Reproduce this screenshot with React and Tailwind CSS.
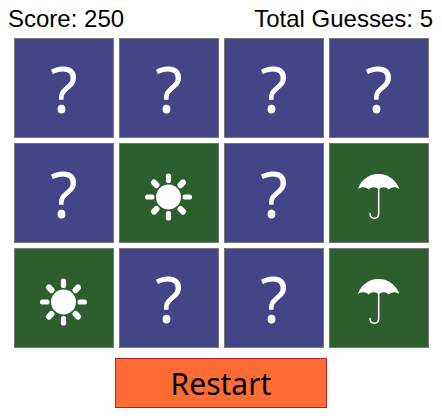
const cards = ["?", "?", "?", "?", "?", "sun", "?", "umbrella", "sun", "?", "?", "umbrella"];

const SunIcon = () => (
    <svg className="mt-[7px]" width="50" height="50" viewBox="0 0 50 50" fill="white">
        <g transform="translate(-0.5 0)">
            <circle cx="25" cy="25" r="12.5" />
            {[0, 90, 180, 270].map((angle) => (
                <rect key={angle} x="22.4" y="1.5" width="5.2" height="9.5" rx="2.6" transform={`rotate(${angle} 25 25)`} />
            ))}
            {[45, 135, 225, 315].map((angle) => (
                <rect key={angle} x="22" y="1.5" width="6" height="9.5" rx="2.6" transform={`rotate(${angle} 25 25)`} />
            ))}
        </g>
    </svg>
);

const UmbrellaIcon = () => (
    <svg className="mt-[8px]" width="42" height="46" viewBox="0 0 42 46" fill="none">
        <path
            d="M20.7 0 C9 0 2 8 0 15 C3 12.5 8 12.5 10.7 15.5 C13 12.5 18.5 12.5 20.7 15.5 C23 12.5 28 12.5 30.7 15.5 C33.5 12.5 38 12.5 41.3 15 C39 8 32 0 20.7 0 Z"
            fill="white"
        />
        <path
            d="M20.7 14 V39.5 C20.7 42.5 19 44.2 16.3 44.2 C13.7 44.2 12 42.5 12 39.5"
            stroke="white"
            strokeWidth="1.5"
            strokeLinecap="round"
        />
    </svg>
);

const Card = ({ value }) => {
    const flipped = value !== "?";
    return (
        <div
            className={`flex h-[100px] w-[100px] items-center justify-center border border-[#777777] text-white ${
                flipped ? "bg-[#2c5f2d]" : "bg-[#444486]"
            }`}
        >
            {value === "?" && (
                <span className="font-['Noto_Sans',sans-serif] text-[63px] leading-none">?</span>
            )}
            {value === "sun" && <SunIcon />}
            {value === "umbrella" && <UmbrellaIcon />}
        </div>
    );
};

const App = () => {
    return (
        <div className="h-[416px] w-[442px] bg-white font-['Liberation_Sans',sans-serif] text-black">
            <div className="flex h-[38px] items-start justify-between pl-[8px] pr-[9px] pt-[5px] text-[24px] leading-[28px]">
                <span>Score: 250</span>
                <span>Total Guesses: 5</span>
            </div>
            <div className="ml-[14px] grid w-fit grid-cols-4 gap-[5px]">
                {cards.map((value, index) => (
                    <Card key={index} value={value} />
                ))}
            </div>
            <button className="mt-[10px] ml-[115px] block h-[50px] w-[212px] border border-[#b22222] bg-[#ff6b35] pt-[2px] font-['Noto_Sans',sans-serif] text-[30px] leading-none text-black">
                Restart
            </button>
        </div>
    );
};

export default App;
